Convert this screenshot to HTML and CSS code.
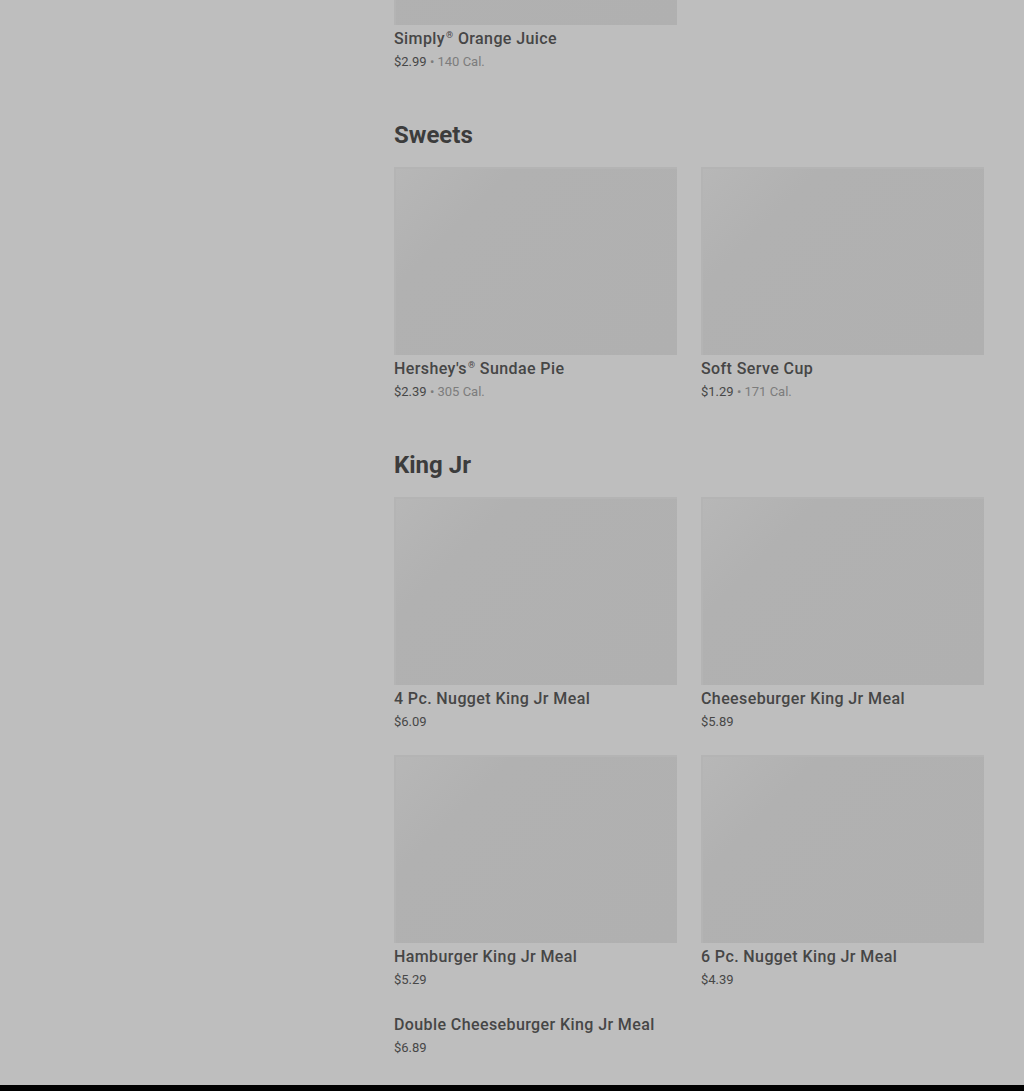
FILE: index.html
```html
<!DOCTYPE html>
<html lang="en">
<head>
    <meta charset="UTF-8">
    <meta name="viewport" content="width=device-width, initial-scale=1.0">
    <title>Menu</title>
    <link rel="stylesheet" href="styles.css">
</head>
<body>
    <div class="page">
        <aside class="sidebar"></aside>

        <main class="menu">
            <section class="section first">
                <div class="grid">
                    <div class="item">
                        <div class="thumb"></div>
                        <h3>Simply<sup>®</sup> Orange Juice</h3>
                        <p class="meta">$2.99 <span class="cal">• 140 Cal.</span></p>
                    </div>
                </div>
            </section>

            <section class="section">
                <h2>Sweets</h2>
                <div class="grid">
                    <div class="item">
                        <div class="thumb"></div>
                        <h3>Hershey's<sup>®</sup> Sundae Pie</h3>
                        <p class="meta">$2.39 <span class="cal">• 305 Cal.</span></p>
                    </div>
                    <div class="item">
                        <div class="thumb"></div>
                        <h3>Soft Serve Cup</h3>
                        <p class="meta">$1.29 <span class="cal">• 171 Cal.</span></p>
                    </div>
                </div>
            </section>

            <section class="section">
                <h2>King Jr</h2>
                <div class="grid">
                    <div class="item">
                        <div class="thumb"></div>
                        <h3>4 Pc. Nugget King Jr Meal</h3>
                        <p class="meta">$6.09</p>
                    </div>
                    <div class="item">
                        <div class="thumb"></div>
                        <h3>Cheeseburger King Jr Meal</h3>
                        <p class="meta">$5.89</p>
                    </div>
                    <div class="item">
                        <div class="thumb"></div>
                        <h3>Hamburger King Jr Meal</h3>
                        <p class="meta">$5.29</p>
                    </div>
                    <div class="item">
                        <div class="thumb"></div>
                        <h3>6 Pc. Nugget King Jr Meal</h3>
                        <p class="meta">$4.39</p>
                    </div>
                    <div class="item">
                        <h3>Double Cheeseburger King Jr Meal</h3>
                        <p class="meta">$6.89</p>
                    </div>
                </div>
            </section>
        </main>
    </div>

    <footer class="footer"></footer>
</body>
</html>
```

FILE: styles.css
```css
* {
    margin: 0;
    padding: 0;
    box-sizing: border-box;
}

body {
    font-family: Roboto, "Liberation Sans", sans-serif;
    background: #bebebe;
    color: #434343;
    min-height: 100vh;
    display: flex;
    flex-direction: column;
}

.page {
    display: flex;
    margin-top: -163px;
    padding-bottom: 26px;
}

.sidebar {
    width: 394px;
    flex-shrink: 0;
}

.menu {
    width: 590px;
}

.section {
    margin-top: 46px;
}

.section.first {
    margin-top: 0;
}

.section h2 {
    font-size: 24px;
    font-weight: 700;
    line-height: 32px;
    color: #3c3c3c;
    margin-bottom: 16px;
}

.grid {
    display: grid;
    grid-template-columns: 283px 283px;
    column-gap: 24px;
    row-gap: 22px;
}

.thumb {
    height: 188px;
    background: linear-gradient(135deg, #b7b7b7 0%, #b1b1b1 25%, #b0b0b0 100%);
    border-top: 2px solid #b4b4b4;
    border-left: 2px solid #b4b4b4;
    margin-bottom: 2px;
}

.item h3 {
    font-size: 16px;
    font-weight: 500;
    line-height: 24px;
    letter-spacing: 0.4px;
    color: #464646;
}

.item h3 sup {
    font-size: 9px;
    line-height: 0;
    vertical-align: 6px;
    margin-left: 1px;
}

.meta {
    font-size: 13px;
    line-height: 22px;
    color: #474747;
}

.meta .cal {
    color: #7c7c7c;
}

.footer {
    height: 7px;
    background: #000;
    margin-top: auto;
}
```
